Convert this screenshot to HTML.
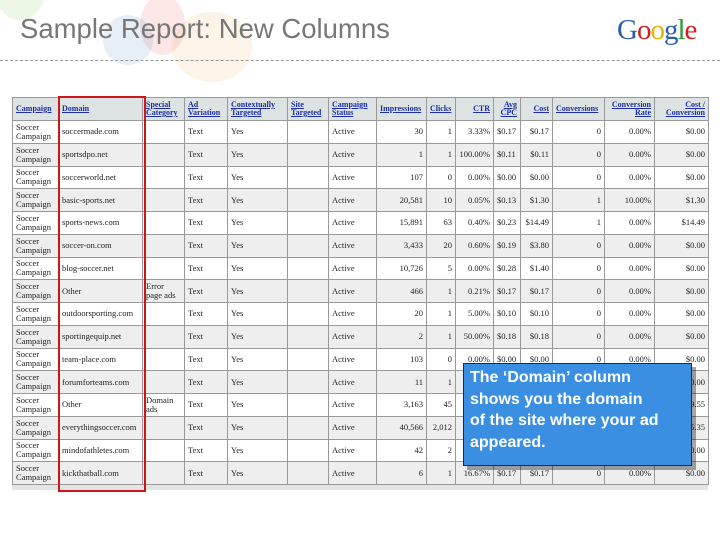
<!DOCTYPE html>
<html><head><meta charset="utf-8"><style>
body{margin:0;width:720px;height:540px;background:#fff;position:relative;overflow:hidden;font-family:"Liberation Serif",serif;}
.t{position:absolute;left:20px;top:13px;font:27.5px "Liberation Sans",sans-serif;color:#777;}
.dash{position:absolute;left:0;top:60px;width:720px;border-top:1px dashed #999;}
.g{position:absolute;left:617px;top:14px;font:29px "Liberation Serif",serif;letter-spacing:-1px;}
.ball{position:absolute;border-radius:50%;opacity:.16;}
table{position:absolute;left:12px;top:97px;border-collapse:collapse;table-layout:fixed;width:696px;font-size:8.5px;color:#222;}
td,th{border:1px solid #999;padding:0 3px;overflow:hidden;white-space:nowrap;line-height:9px;}
th{height:22px;background:#dde3e2;color:#1a2fa8;text-decoration:underline;font-weight:bold;font-size:8px;text-align:left;vertical-align:middle;}
th.r,td.r{text-align:right;}
td{height:21.75px;}
tr:nth-child(odd) td{background:#eee;}
tr.h th{white-space:normal;line-height:8px;}
.frame{position:absolute;left:12px;top:484px;width:696px;height:6px;background:#e4e4e4;}
.red{position:absolute;left:58px;top:96px;width:84px;height:392px;border:2px solid #c8181c;}
.call{position:absolute;left:463px;top:363px;width:221px;height:98px;background:#3a8fe2;border:1.5px solid #1c2a44;box-shadow:4px 4px 0 rgba(0,0,0,.35);color:#fff;font:bold 16px "Liberation Sans",sans-serif;line-height:21.5px;padding:3px 0 0 6px;box-sizing:content-box;}
</style></head><body>
<div class="ball" style="left:-5px;top:-40px;width:50px;height:60px;background:#8c6"></div>
<div class="ball" style="left:140px;top:-5px;width:45px;height:60px;background:#e66"></div>
<div class="ball" style="left:103px;top:15px;width:50px;height:50px;background:#69c"></div>
<div class="ball" style="left:172px;top:12px;width:80px;height:70px;background:#eb6"></div>
<div class="t">Sample Report: New Columns</div>
<div class="g"><span style="color:#2a5db0">G</span><span style="color:#c22">o</span><span style="color:#e7b400">o</span><span style="color:#2a5db0">g</span><span style="color:#2a9a3a">l</span><span style="color:#c22">e</span></div>
<div class="dash"></div>
<div class="frame"></div>
<table>
<colgroup><col style="width:46px"><col style="width:84px"><col style="width:42px"><col style="width:43px"><col style="width:60px"><col style="width:41px"><col style="width:48px"><col style="width:50px"><col style="width:29px"><col style="width:38px"><col style="width:27px"><col style="width:32px"><col style="width:52px"><col style="width:50px"><col style="width:54px"></colgroup>
<tr class="h"><th>Campaign</th><th>Domain</th><th>Special Category</th><th>Ad Variation</th><th>Contextually Targeted</th><th>Site Targeted</th><th>Campaign Status</th><th>Impressions</th><th>Clicks</th><th class="r">CTR</th><th class="r">Avg CPC</th><th class="r">Cost</th><th>Conversions</th><th class="r">Conversion Rate</th><th class="r">Cost / Conversion</th></tr>
<tr><td>Soccer<br>Campaign</td><td>soccermade.com</td><td></td><td>Text</td><td>Yes</td><td></td><td>Active</td><td class="r">30</td><td class="r">1</td><td class="r">3.33%</td><td>$0.17</td><td class="r">$0.17</td><td class="r">0</td><td class="r">0.00%</td><td class="r">$0.00</td></tr>
<tr><td>Soccer<br>Campaign</td><td>sportsdpo.net</td><td></td><td>Text</td><td>Yes</td><td></td><td>Active</td><td class="r">1</td><td class="r">1</td><td class="r">100.00%</td><td>$0.11</td><td class="r">$0.11</td><td class="r">0</td><td class="r">0.00%</td><td class="r">$0.00</td></tr>
<tr><td>Soccer<br>Campaign</td><td>soccerworld.net</td><td></td><td>Text</td><td>Yes</td><td></td><td>Active</td><td class="r">107</td><td class="r">0</td><td class="r">0.00%</td><td>$0.00</td><td class="r">$0.00</td><td class="r">0</td><td class="r">0.00%</td><td class="r">$0.00</td></tr>
<tr><td>Soccer<br>Campaign</td><td>basic-sports.net</td><td></td><td>Text</td><td>Yes</td><td></td><td>Active</td><td class="r">20,581</td><td class="r">10</td><td class="r">0.05%</td><td>$0.13</td><td class="r">$1.30</td><td class="r">1</td><td class="r">10.00%</td><td class="r">$1.30</td></tr>
<tr><td>Soccer<br>Campaign</td><td>sports-news.com</td><td></td><td>Text</td><td>Yes</td><td></td><td>Active</td><td class="r">15,891</td><td class="r">63</td><td class="r">0.40%</td><td>$0.23</td><td class="r">$14.49</td><td class="r">1</td><td class="r">0.00%</td><td class="r">$14.49</td></tr>
<tr><td>Soccer<br>Campaign</td><td>soccer-on.com</td><td></td><td>Text</td><td>Yes</td><td></td><td>Active</td><td class="r">3,433</td><td class="r">20</td><td class="r">0.60%</td><td>$0.19</td><td class="r">$3.80</td><td class="r">0</td><td class="r">0.00%</td><td class="r">$0.00</td></tr>
<tr><td>Soccer<br>Campaign</td><td>blog-soccer.net</td><td></td><td>Text</td><td>Yes</td><td></td><td>Active</td><td class="r">10,726</td><td class="r">5</td><td class="r">0.00%</td><td>$0.28</td><td class="r">$1.40</td><td class="r">0</td><td class="r">0.00%</td><td class="r">$0.00</td></tr>
<tr><td>Soccer<br>Campaign</td><td>Other</td><td>Error<br>page ads</td><td>Text</td><td>Yes</td><td></td><td>Active</td><td class="r">466</td><td class="r">1</td><td class="r">0.21%</td><td>$0.17</td><td class="r">$0.17</td><td class="r">0</td><td class="r">0.00%</td><td class="r">$0.00</td></tr>
<tr><td>Soccer<br>Campaign</td><td>outdoorsporting.com</td><td></td><td>Text</td><td>Yes</td><td></td><td>Active</td><td class="r">20</td><td class="r">1</td><td class="r">5.00%</td><td>$0.10</td><td class="r">$0.10</td><td class="r">0</td><td class="r">0.00%</td><td class="r">$0.00</td></tr>
<tr><td>Soccer<br>Campaign</td><td>sportingequip.net</td><td></td><td>Text</td><td>Yes</td><td></td><td>Active</td><td class="r">2</td><td class="r">1</td><td class="r">50.00%</td><td>$0.18</td><td class="r">$0.18</td><td class="r">0</td><td class="r">0.00%</td><td class="r">$0.00</td></tr>
<tr><td>Soccer<br>Campaign</td><td>team-place.com</td><td></td><td>Text</td><td>Yes</td><td></td><td>Active</td><td class="r">103</td><td class="r">0</td><td class="r">0.00%</td><td>$0.00</td><td class="r">$0.00</td><td class="r">0</td><td class="r">0.00%</td><td class="r">$0.00</td></tr>
<tr><td>Soccer<br>Campaign</td><td>forumforteams.com</td><td></td><td>Text</td><td>Yes</td><td></td><td>Active</td><td class="r">11</td><td class="r">1</td><td class="r">9.09%</td><td>$0.00</td><td class="r">$0.00</td><td class="r">0</td><td class="r">0.00%</td><td class="r">$0.00</td></tr>
<tr><td>Soccer<br>Campaign</td><td>Other</td><td>Domain<br>ads</td><td>Text</td><td>Yes</td><td></td><td>Active</td><td class="r">3,163</td><td class="r">45</td><td class="r">1.42%</td><td>$0.20</td><td class="r">$9.55</td><td class="r">0</td><td class="r">0.00%</td><td class="r">$9.55</td></tr>
<tr><td>Soccer<br>Campaign</td><td>everythingsoccer.com</td><td></td><td>Text</td><td>Yes</td><td></td><td>Active</td><td class="r">40,566</td><td class="r">2,012</td><td class="r">4.96%</td><td>$0.20</td><td class="r">$5.35</td><td class="r">0</td><td class="r">0.00%</td><td class="r">$5.35</td></tr>
<tr><td>Soccer<br>Campaign</td><td>mindofathletes.com</td><td></td><td>Text</td><td>Yes</td><td></td><td>Active</td><td class="r">42</td><td class="r">2</td><td class="r">4.76%</td><td>$0.00</td><td class="r">$0.00</td><td class="r">0</td><td class="r">0.00%</td><td class="r">$0.00</td></tr>
<tr><td>Soccer<br>Campaign</td><td>kickthatball.com</td><td></td><td>Text</td><td>Yes</td><td></td><td>Active</td><td class="r">6</td><td class="r">1</td><td class="r">16.67%</td><td>$0.17</td><td class="r">$0.17</td><td class="r">0</td><td class="r">0.00%</td><td class="r">$0.00</td></tr>
</table>
<div class="red"></div>
<div class="call">The ‘Domain’ column<br>shows you the domain<br>of the site where your ad<br>appeared.</div>
</body></html>
